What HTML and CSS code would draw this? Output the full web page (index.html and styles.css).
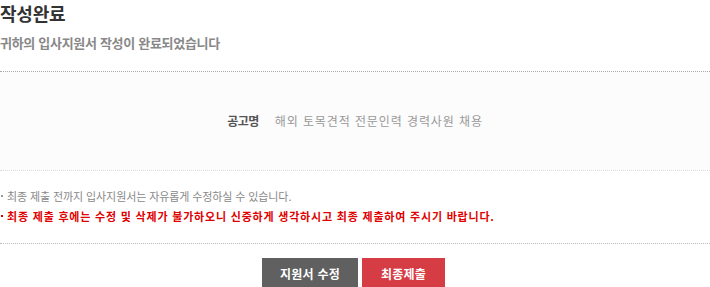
FILE: index.html
```html
<!DOCTYPE html>
<html lang="ko">
<head>
<meta charset="utf-8">
<title>작성완료</title>
<link rel="stylesheet" href="styles.css">
</head>
<body>
<div class="page">
  <h1 class="title">작성완료</h1>
  <p class="subtitle">귀하의 입사지원서 작성이 완료되었습니다</p>
  <div class="info-box">
    <span class="info-label">공고명</span>
    <span class="info-value">해외 토목견적 전문인력 경력사원 채용</span>
  </div>
  <ul class="notes">
    <li class="note">최종 제출 전까지 입사지원서는 자유롭게 수정하실 수 있습니다.</li>
    <li class="note note-warn">최종 제출 후에는 수정 및 삭제가 불가하오니 신중하게 생각하시고 최종 제출하여 주시기 바랍니다.</li>
  </ul>
  <div class="actions">
    <button class="btn btn-edit" type="button">지원서 수정</button>
    <button class="btn btn-submit" type="button">최종제출</button>
  </div>
</div>
</body>
</html>
```
FILE: styles.css
```css
html, body {
  margin: 0;
  padding: 0;
  background: #fff;
}
body {
  font-family: "Noto Sans CJK KR", "Noto Sans", sans-serif;
  color: #333;
}
.page {
  width: 710px;
}
.title {
  margin: 0;
  padding-top: 3px;
  font-size: 18px;
  line-height: 20px;
  font-weight: 700;
  color: #333;
  letter-spacing: -0.2px;
}
.subtitle {
  margin: 12px 0 0;
  font-size: 13px;
  line-height: 16px;
  font-weight: 700;
  color: #888;
  letter-spacing: -0.3px;
}
.info-box {
  margin-top: 20px;
  height: 100px;
  border-top: 1px dotted #aaa;
  border-bottom: 1px dotted #ddd;
  background: #fcfcfc;
  display: flex;
  align-items: center;
  justify-content: center;
  gap: 16px;
  font-size: 12px;
  padding-bottom: 2px;
  box-sizing: border-box;
}
.info-label {
  font-weight: 700;
  color: #555;
  letter-spacing: -0.5px;
}
.info-value {
  color: #999;
  letter-spacing: 0.9px;
}
.notes {
  list-style: none;
  margin: 0;
  padding: 15px 0 17px;
  border-bottom: 1px dotted #bbb;
}
.note {
  position: relative;
  padding-left: 7px;
  font-size: 11px;
  line-height: 20px;
  color: #888;
  letter-spacing: -0.1px;
}
.note::before {
  content: "";
  position: absolute;
  left: 1px;
  top: 9px;
  width: 2px;
  height: 2px;
  background: #999;
}
.note-warn {
  color: #e00000;
  font-weight: 700;
  letter-spacing: 0.8px;
}
.note-warn::before {
  background: #c00;
}
.actions {
  display: flex;
  justify-content: center;
  gap: 4px;
  margin-top: 14px;
  padding-right: 3px;
}
.btn {
  border: 0;
  height: 30px;
  padding: 0;
  font-family: inherit;
  font-size: 12px;
  font-weight: 700;
  color: #fff;
  letter-spacing: 0.2px;
}
.btn-edit {
  width: 96px;
  background: #606060;
}
.btn-submit {
  width: 83px;
  background: #d63c44;
}
```
